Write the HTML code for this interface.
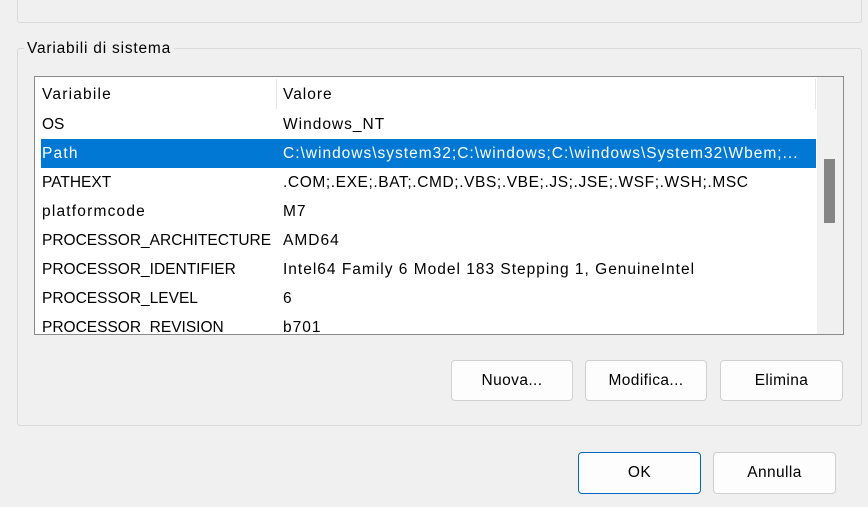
<!DOCTYPE html>
<html><head><style>
body{margin:0;width:868px;height:507px;background:#f0f0f0;font-family:"Liberation Sans",sans-serif;font-size:15.5px;color:#000;position:relative;overflow:hidden}
.a{position:absolute}
.btn{position:absolute;background:#fdfdfd;border:1px solid #d0d0d0;border-radius:4px;box-sizing:border-box;text-align:center;line-height:39px;letter-spacing:0.4px}
.r{position:absolute;left:42px;height:29px;line-height:29px;white-space:nowrap}
.l{letter-spacing:1.2px}
.v{position:absolute;left:283px;height:29px;line-height:29px;white-space:nowrap;letter-spacing:1px}
</style></head><body>
<div class="a" style="left:17px;top:-5px;width:843px;height:26px;border:1px solid #dadada;border-radius:3px"></div>
<div class="a" style="left:17px;top:48px;width:843px;height:376px;border:1px solid #dadada;border-radius:3px"></div>
<div class="a" style="left:24px;top:38px;background:#f0f0f0;padding:0 3px;line-height:22px;letter-spacing:0.8px">Variabili di sistema</div>
<div class="a" style="left:34px;top:76px;width:808px;height:257px;border:1px solid #8a8a8a;background:#fff;overflow:hidden">
 <div class="a" style="left:241px;top:2px;width:1px;height:30px;background:#e5e5e5"></div>
 <div class="a" style="left:780px;top:2px;width:1px;height:30px;background:#e5e5e5"></div>
 <div class="a" style="left:6px;top:62px;width:775px;height:29px;background:#0078d4"></div>
 <div class="a" style="left:782px;top:0;width:26px;height:257px;background:#f0f0f0"></div>
 <div class="a" style="left:789px;top:82px;width:11px;height:64px;background:#858585"></div>
</div>
<div class="r l" style="top:80px">Variabile</div><div class="v" style="top:80px">Valore</div>
<div class="r" style="top:110px">OS</div><div class="v" style="top:110px">Windows_NT</div>
<div class="r l" style="top:139px;color:#fff">Path</div><div class="v" style="top:139px;color:#fff;width:530px;overflow:hidden">C:\windows\system32;C:\windows;C:\windows\System32\Wbem;...</div>
<div class="r" style="top:168px">PATHEXT</div><div class="v" style="top:168px;letter-spacing:0.6px">.COM;.EXE;.BAT;.CMD;.VBS;.VBE;.JS;.JSE;.WSF;.WSH;.MSC</div>
<div class="r l" style="top:197px">platformcode</div><div class="v" style="top:197px">M7</div>
<div class="r" style="top:226px">PROCESSOR_ARCHITECTURE</div><div class="v" style="top:226px">AMD64</div>
<div class="r" style="top:255px">PROCESSOR_IDENTIFIER</div><div class="v" style="top:255px">Intel64 Family 6 Model 183 Stepping 1, GenuineIntel</div>
<div class="r" style="top:284px">PROCESSOR_LEVEL</div><div class="v" style="top:284px">6</div>
<div class="r" style="top:313px;height:20px;overflow:hidden">PROCESSOR_REVISION</div><div class="v" style="top:313px;height:20px;overflow:hidden">b701</div>
<div class="btn" style="left:451px;top:360px;width:122px;height:41px">Nuova...</div>
<div class="btn" style="left:585px;top:360px;width:122px;height:41px">Modifica...</div>
<div class="btn" style="left:720px;top:360px;width:123px;height:41px">Elimina</div>
<div class="btn" style="left:578px;top:452px;width:123px;height:42px;border-color:#0067c0">OK</div>
<div class="btn" style="left:713px;top:452px;width:123px;height:42px">Annulla</div>
</body></html>
